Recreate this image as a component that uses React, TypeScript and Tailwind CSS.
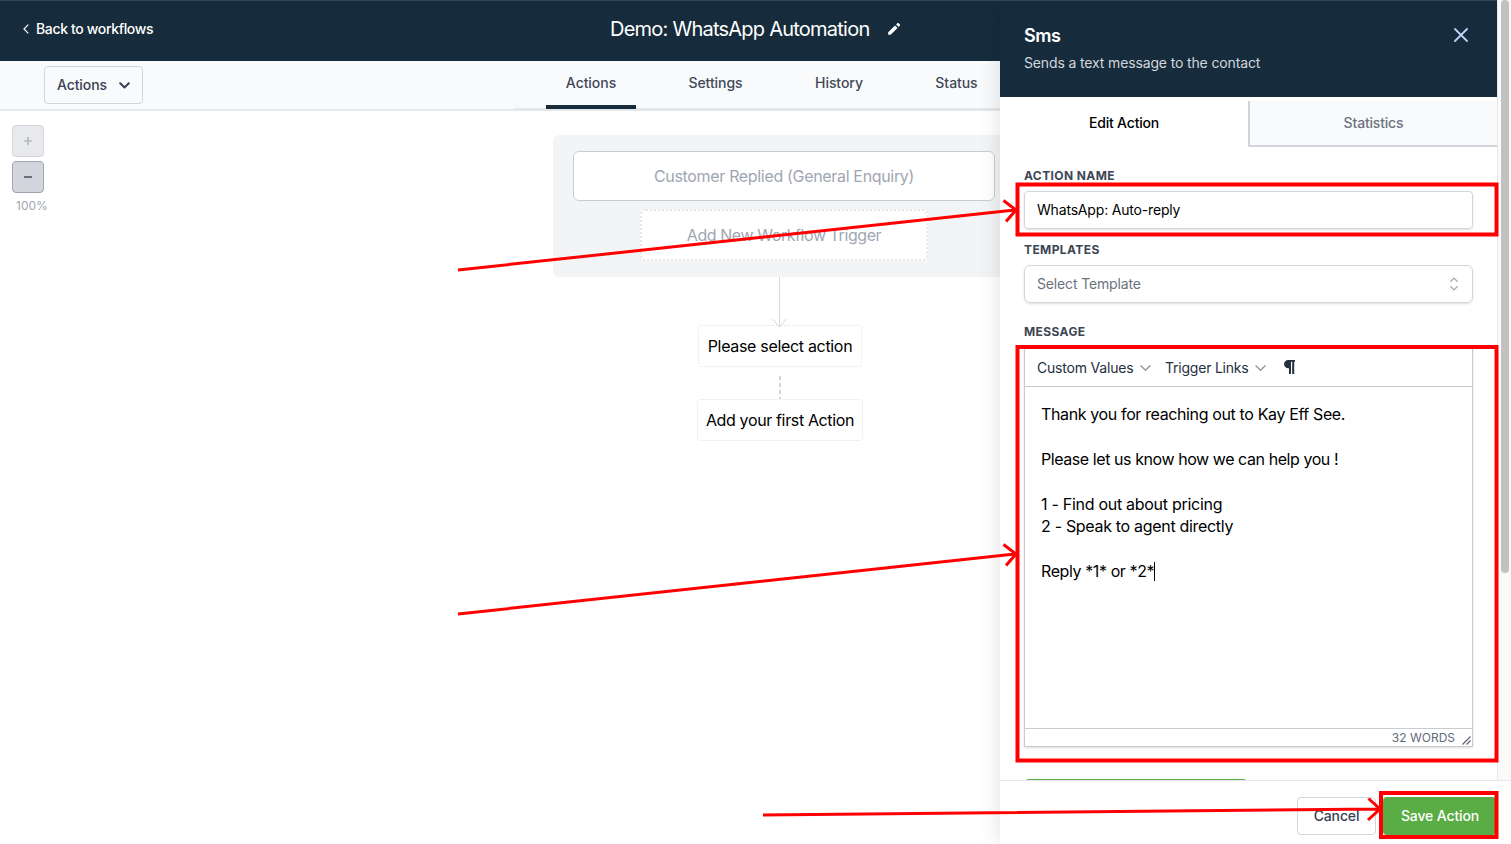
import React from "react";

const FONT = "font-['Inter','Liberation_Sans',sans-serif]";

function Header() {
  return (
    <header className="flex h-[61px] shrink-0 items-center border-t border-[#324654] bg-[#162c3c] pb-1 text-white">
      <a className="flex w-[610px] items-center pl-[23px] text-sm font-medium leading-5 tracking-[-0.35px]">
        <svg className="mr-[7px] h-[10px] w-[6px]" viewBox="0 0 6 10" fill="none" stroke="currentColor" strokeWidth="1.2">
          <path d="M5.3.7 1 5l4.3 4.3" />
        </svg>
        <span className="whitespace-nowrap">Back to workflows</span>
      </a>
      <h1 className="whitespace-nowrap text-xl font-normal leading-7 tracking-[-0.76px]">Demo: WhatsApp Automation</h1>
      <svg className="ml-auto mr-[100px] h-3 w-3" viewBox="0 0 12 12" fill="currentColor">
        <path d="M.2 11.8V9.300L7 2.500l2.500 2.500-6.800 6.800zM8.100 1.400 9.300.3a1 1 0 0 1 1.400 0l1 1a1 1 0 0 1 0 1.400l-1.100 1.200z" />
      </svg>
    </header>
  );
}

const tabs = [
  { label: "Actions", cls: "w-[90px] border-[#162c3c]" },
  { label: "Settings", cls: "ml-[32px] w-[95px] border-transparent" },
  { label: "History", cls: "ml-[32px] w-[88px] border-transparent" },
  { label: "Status", cls: "ml-[32px] w-[83px] border-transparent" },
];

function Toolbar() {
  return (
    <div className="flex h-[50px] shrink-0 items-start border-b-2 border-[#e5e7eb] bg-[#f9fafc]">
      <button className="ml-[44px] mt-[5px] flex h-[38px] w-[99px] items-center justify-between rounded border border-[#d2d6dc] pl-3 pr-3 text-sm font-medium tracking-[-0.1px] text-[#374151]">
        <span>Actions</span>
        <svg className="h-[7px] w-[11px]" viewBox="0 0 11 7" fill="none" stroke="currentColor" strokeWidth="2" strokeLinecap="round" strokeLinejoin="round">
          <path d="M1.2 1.2 5.5 5.5l4.3-4.3" />
        </svg>
      </button>
      <nav className="ml-[371px] flex h-[48px] flex-1 border-b border-[#e5e7eb] pl-8">
        {tabs.map((t) => (
          <a key={t.label} className={`flex h-[48px] shrink-0 justify-center border-b-4 pt-[12px] text-sm font-medium leading-5 tracking-[-0.05px] text-[#414957] ${t.cls}`}>
            <span>{t.label}</span>
          </a>
        ))}
      </nav>
    </div>
  );
}

function Canvas() {
  return (
    <div className="flex flex-1 items-start overflow-hidden bg-white">
      <div className="ml-3 mt-[14px] flex w-[40px] shrink-0 flex-col gap-1">
        <button className="flex h-8 w-8 items-center justify-center rounded border border-[#d2d5dc] bg-[#e8e9ed] text-[#a4a7ae]">
          <svg className="h-2 w-2" viewBox="0 0 8 8" stroke="currentColor" strokeWidth="1.2"><path d="M0 4h8M4 0v8" /></svg>
        </button>
        <button className="flex h-8 w-8 items-center justify-center rounded border border-[#9fa6b2] bg-[#d2d6dc] text-[#4b5563]">
          <svg className="h-2 w-2" viewBox="0 0 8 8" stroke="currentColor" strokeWidth="1.6"><path d="M0 4h8" /></svg>
        </button>
        <span className="ml-1 mt-px text-xs leading-4 text-[#9fa6b2]">100%</span>
      </div>
      <div className="ml-[501px] mt-6 flex w-[454px] shrink-0 flex-col items-center">
        <div className="flex h-[142px] w-[462px] flex-col items-center self-start rounded-md bg-[#f3f4f6] pt-4 text-base text-[#9fa6b2]">
          <div className="flex h-[50px] w-[422px] items-center justify-center rounded-md border border-[#c9cdd3] bg-white">
            <span className="whitespace-nowrap tracking-[-0.33px]">Customer Replied (General Enquiry)</span>
          </div>
          <div className="mt-2 flex h-[52px] w-[288px] items-center justify-center rounded-md border-2 border-dotted border-[#e5e7eb] bg-white">
            <span className="whitespace-nowrap tracking-[-0.43px]">Add New Workflow Trigger</span>
          </div>
        </div>
        <svg className="z-10 -mb-[3px] h-[51px] w-4" viewBox="0 0 16 51" fill="none" stroke="#d5d8dd">
          <path d="M7.5 0v50M.5 42l7 8 7-8" />
        </svg>
        <div className="flex h-[42px] w-[164px] items-center justify-center rounded border border-dotted border-[#e2e4e8] text-base text-black">
          <span className="whitespace-nowrap tracking-[-0.32px]">Please select action</span>
        </div>
        <div className="mt-[9px] h-[23px] w-[2px] bg-[repeating-linear-gradient(to_bottom,#d2d6dc_0_4px,transparent_4px_7px)]" />
        <div className="flex h-[42px] w-[166px] items-center justify-center rounded border border-dotted border-[#e2e4e8] text-base text-black">
          <span className="whitespace-nowrap tracking-[-0.36px]">Add your first Action</span>
        </div>
      </div>
    </div>
  );
}

function Chevron() {
  return (
    <svg className="h-[6px] w-[11px]" viewBox="0 0 11 6" fill="none" stroke="#8b93a0" strokeWidth="1.3">
      <path d="m.6.5 4.900 4.700L10.400.5" />
    </svg>
  );
}

function MessageEditor() {
  return (
    <div className="mt-2 flex h-[399px] w-[449px] flex-col border border-[#c9cccf] text-black shadow-sm">
      <div className="flex h-[38px] shrink-0 items-center border-b border-[#c9cccf] pl-3 text-sm text-[#252f3f]">
        <span className="mr-[6.500px] whitespace-nowrap tracking-[-0.19px]">Custom Values</span>
        <Chevron />
        <span className="ml-[14px] mr-[7px] whitespace-nowrap tracking-[-0.22px]">Trigger Links</span>
        <Chevron />
        <svg className="mb-[2px] ml-[18px] h-[14px] w-[11px]" viewBox="0 0 11 14" fill="currentColor">
          <path d="M4.200 0H11v1.800H10.200V14H8.200V1.800H7V14H5V8.300H4.200A4.150 4.150 0 0 1 4.200 0z" />
        </svg>
      </div>
      <div className="flex-1 whitespace-pre pl-4 pt-4 text-base leading-[22.4px]">
        <p className="tracking-[-0.37px]">Thank you for reaching out to Kay Eff See.</p>
        <p>&nbsp;</p>
        <p className="tracking-[-0.43px]">Please let us know how we can help you !</p>
        <p>&nbsp;</p>
        <p className="tracking-[-0.28px]">1 - Find out about pricing</p>
        <p className="tracking-[-0.31px]">2 - Speak to agent directly</p>
        <p>&nbsp;</p>
        <p className="flex items-center tracking-[-0.4px]"><span>Reply *1* or *2*</span><span className="h-[19px] w-px bg-black" /></p>
      </div>
      <div className="flex h-[18px] shrink-0 items-center justify-end border-t border-[#c9cccf] pr-px text-xs text-[#626b7a]">
        <span className="mt-px">32 WORDS</span>
        <svg className="ml-[7px] mt-[6px] h-[9px] w-[9px]" viewBox="0 0 9 9" stroke="#5b6470" strokeWidth="1.2"><path d="M.5 8.500 8.500.5M4.500 8.500l4-4" /></svg>
      </div>
    </div>
  );
}

const label = "text-xs font-bold leading-4 tracking-[0.4px] text-[#3c4655]";

function SmsPanel() {
  return (
    <aside className="z-10 flex h-full w-[511px] shrink-0 flex-col bg-white shadow-[0_0_22px_rgba(0,0,0,0.12)]">
      <div className="flex min-h-0 flex-1">
        <div className="flex w-[497px] shrink-0 flex-col overflow-hidden">
          <div className="flex h-[97px] shrink-0 justify-between border-t border-[#324654] bg-[#162c3c] pl-6 pr-[29px] pt-5 text-white">
            <div>
              <h2 className="pt-px text-lg font-semibold leading-7 tracking-[-0.5px]">Sms</h2>
              <p className="mt-[3px] text-sm leading-5 tracking-[-0.14px] text-[#d2d6dc]">Sends a text message to the contact</p>
            </div>
            <svg className="mt-[7px] h-[14px] w-[14px]" viewBox="0 0 14 14" stroke="#c3d0fb" strokeWidth="1.8" strokeLinecap="round"><path d="m1 1 12 12M13 1 1 13" /></svg>
          </div>
          <div className="mt-1 flex h-[46px] shrink-0 text-sm font-medium tracking-[-0.18px]">
            <div className="flex w-[248px] items-center justify-center pb-[2px] text-black"><span>Edit Action</span></div>
            <div className="flex flex-1 items-center justify-center border-b-2 border-l-2 border-[#d2d6dc] bg-[#f9fafb] text-[#6b7280]"><span>Statistics</span></div>
          </div>
          <div className="flex flex-col pl-6 pt-[21px]">
            <label className={label}>ACTION NAME</label>
            <div className="mt-[7px] flex h-[38px] w-[449px] items-center rounded border border-[#d2d6dc] pl-3 text-sm tracking-[-0.18px] text-black shadow-sm">WhatsApp: Auto-reply</div>
            <label className={`mt-[13px] ${label}`}>TEMPLATES</label>
            <div className="mt-[7px] flex h-[38px] w-[449px] items-center justify-between rounded-md border border-[#d2d6dc] pl-3 pr-[14px] text-sm tracking-[-0.15px] text-[#6b7280] shadow-sm">
              <span>Select Template</span>
              <svg className="h-[14px] w-2" viewBox="0 0 8 14" fill="none" stroke="#9fa6b2" strokeWidth="1.3" strokeLinecap="round" strokeLinejoin="round"><path d="m.8 4.300 3.200-3.200 3.200 3.200M.8 9.700l3.200 3.200 3.200-3.200" /></svg>
            </div>
            <label className={`mt-[21px] ${label}`}>MESSAGE</label>
            <MessageEditor />
            <div className="ml-px mt-8 h-[38px] w-[222px] rounded bg-[#5aac44]" />
          </div>
        </div>
        <div className="flex flex-1 justify-center border-l border-[#e8e8e8] bg-[#fafafa] pl-px">
          <div className="h-[573px] w-2 rounded-full bg-[#c1c1c1]" />
        </div>
      </div>
      <div className="flex h-[64px] shrink-0 items-start justify-end gap-[7px] border-t border-[#e5e7eb] bg-white pr-[15px] pt-4 text-sm font-medium tracking-[-0.14px]">
        <button className="flex h-[38px] w-[79px] items-center justify-center rounded border border-[#d2d6dc] text-[#374151]"><span>Cancel</span></button>
        <button className="flex h-[38px] w-[113px] items-center justify-center rounded bg-[#5aac44] pl-px text-white"><span>Save Action</span></button>
      </div>
    </aside>
  );
}

function Annotations() {
  return (
    <svg className="pointer-events-none absolute inset-0 z-20 h-[844px] w-[1511px]" viewBox="0 0 1511 844" fill="none" stroke="#ff0000">
      <g strokeWidth="4">
        <rect x="1017.500" y="184.500" width="479" height="50" />
        <rect x="1017.500" y="347" width="479" height="413.500" />
        <rect x="1381" y="793" width="115.500" height="44" />
      </g>
      <g strokeWidth="3">
        <path d="M458 270 1015 210M1003.500 200.500 1016 210l-10 11.500" />
        <path d="M458 614 1015 554M1003.500 544.500 1016 554l-10 11.500" />
        <path d="M763 815 1380 809M1368.500 798.500 1380 809l-12 11" />
      </g>
    </svg>
  );
}

export default function App() {
  return (
    <div className={`relative flex h-[844px] w-[1511px] overflow-hidden bg-white ${FONT}`}>
      <main className="flex w-[1000px] shrink-0 flex-col">
        <Header />
        <Toolbar />
        <Canvas />
      </main>
      <SmsPanel />
      <Annotations />
    </div>
  );
}
